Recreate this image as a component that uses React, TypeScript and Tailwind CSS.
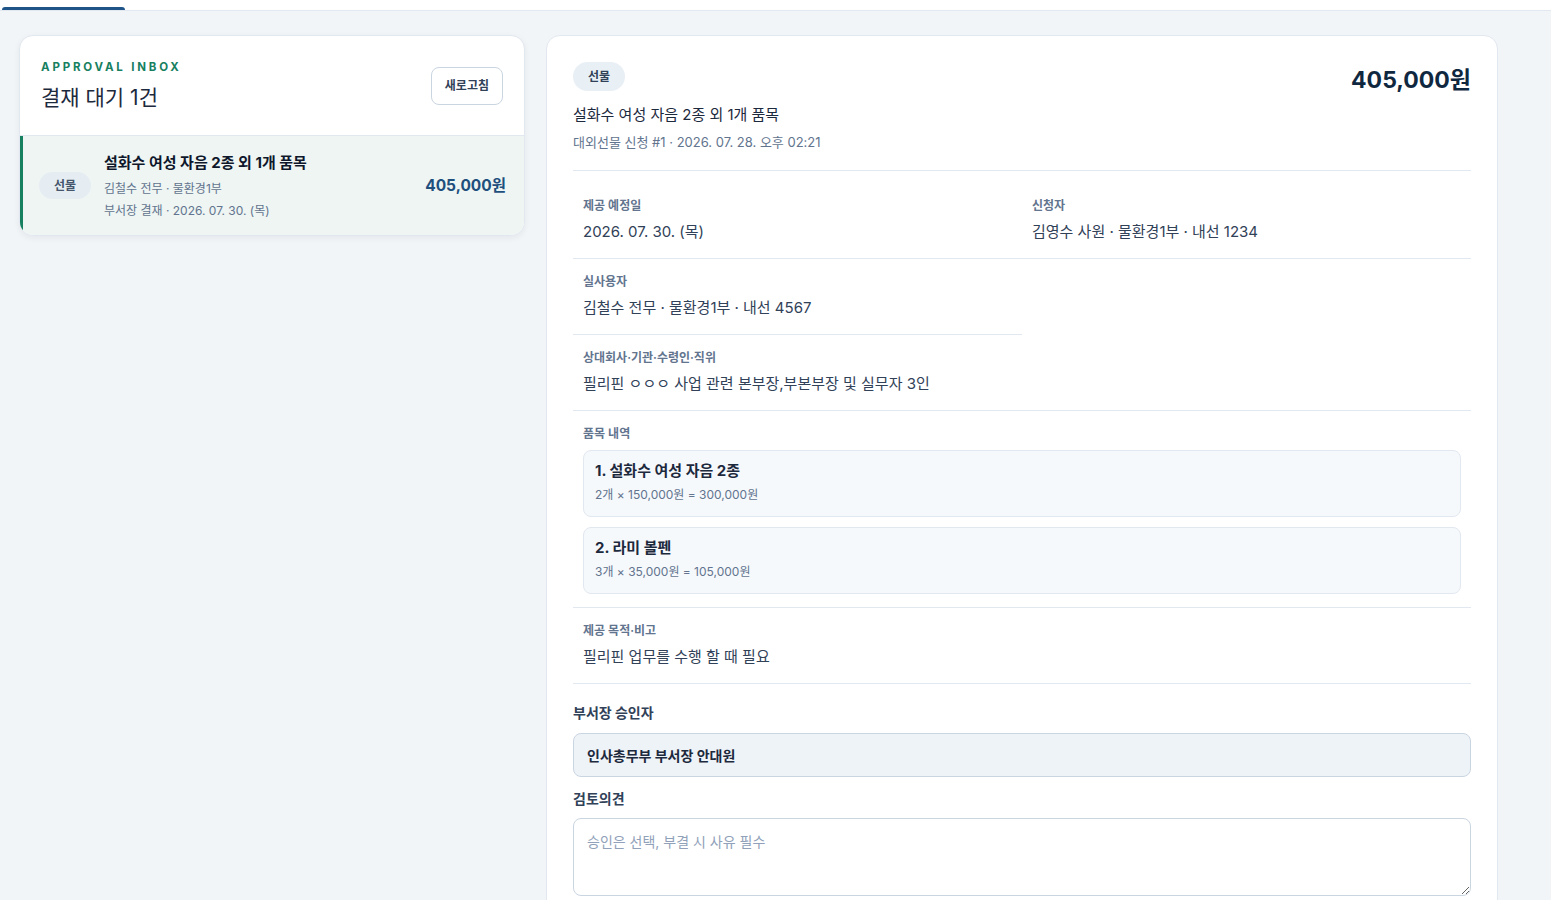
import { FC } from 'react';

const font = { fontFamily: '"Inter", "Noto Sans CJK KR", sans-serif' };

interface FieldProps {
  label: string;
  value: string;
  full?: boolean;
}

const Field: FC<FieldProps> = ({ label, value, full }) => (
  <div className={`border-b border-slate-200 px-[10px] pt-[15px] pb-[15px] ${full ? 'col-span-2' : ''}`}>
    <div className="text-[12px] leading-4 font-semibold text-slate-500">{label}</div>
    <div className="mt-[7px] text-[15px] leading-[22px] text-slate-700">{value}</div>
  </div>
);

const items = [
  { name: '1. 설화수 여성 자음 2종', calc: '2개 × 150,000원 = 300,000원' },
  { name: '2. 라미 볼펜', calc: '3개 × 35,000원 = 105,000원' },
];

export default function App() {
  return (
    <div className="min-h-screen bg-[#f2f5f8] text-slate-800" style={font}>
      {/* Tab strip (scrolled) */}
      <div className="h-[11px] bg-white border-b border-slate-200 flex items-end">
        <div className="ml-[2px] w-[123px] h-[3px] rounded-t-sm bg-[#1f5489]" />
      </div>

      <div className="flex items-start gap-[21px] pl-[19px] pt-[24px]">
        {/* Inbox list */}
        <section className="w-[506px] shrink-0 bg-white border border-slate-200 rounded-[14px] overflow-hidden shadow-[0_2px_6px_rgba(15,23,42,0.06)]">
          <div className="flex items-center justify-between px-[21px] pt-[23px] pb-[22px] border-b border-slate-200">
            <div>
              <div className="text-[11.5px] leading-4 font-bold tracking-[2.8px] text-[#17805f]">APPROVAL INBOX</div>
              <h2 className="mt-[8px] text-[21px] leading-[30px] text-slate-800">결재 대기 1건</h2>
            </div>
            <button className="h-[38px] px-[13px] rounded-lg border border-slate-300 bg-white text-[12px] font-bold text-slate-700">
              새로고침
            </button>
          </div>

          <div className="flex items-center bg-[#eef5f3] border-l-[3px] border-[#17805f] pl-[16px] pr-[18px] h-[99px]">
            <span className="w-[52px] h-[27px] rounded-full bg-[#e6edf2] flex items-center justify-center text-[12px] font-bold text-slate-600">
              선물
            </span>
            <div className="ml-[13px] flex-1">
              <div className="text-[15px] leading-5 font-bold text-slate-900">설화수 여성 자음 2종 외 1개 품목</div>
              <div className="mt-[8px] text-[12px] leading-4 text-slate-500">김철수 전무 · 물환경1부</div>
              <div className="mt-[6px] text-[12px] leading-4 text-slate-500">부서장 결재 · 2026. 07. 30. (목)</div>
            </div>
            <div className="text-[15.5px] font-bold text-[#1f4f7d]">405,000원</div>
          </div>
        </section>

        {/* Detail */}
        <section className="w-[952px] shrink-0 bg-white border border-slate-200 rounded-[14px] px-[26px] pt-[26px] pb-6">
          <div className="flex items-start justify-between">
            <div>
              <span className="inline-flex items-center h-[29px] px-[15px] rounded-full bg-[#e8f0f6] text-[12px] font-bold text-slate-700">
                선물
              </span>
              <div className="mt-[14px] text-[15px] leading-5 text-slate-800">설화수 여성 자음 2종 외 1개 품목</div>
              <div className="mt-[7px] text-[13px] leading-5 text-slate-500">대외선물 신청 #1 · 2026. 07. 28. 오후 02:21</div>
            </div>
            <div className="mt-[2px] text-[23px] leading-8 font-bold text-[#10283f]">405,000원</div>
          </div>

          <div className="mt-[18px] border-t border-slate-200 pt-[12px] grid grid-cols-2">
            <Field label="제공 예정일" value="2026. 07. 30. (목)" />
            <Field label="신청자" value="김영수 사원 · 물환경1부 · 내선 1234" />
            <Field label="실사용자" value="김철수 전무 · 물환경1부 · 내선 4567" />
            <div />
            <Field full label="상대회사·기관·수령인·직위" value="필리핀 ㅇㅇㅇ 사업 관련 본부장,부본부장 및 실무자 3인" />

            <div className="col-span-2 border-b border-slate-200 px-[10px] pt-[15px] pb-[13px]">
              <div className="text-[12px] leading-4 font-semibold text-slate-500">품목 내역</div>
              <div className="mt-[8px] flex flex-col gap-[10px]">
                {items.map((it) => (
                  <div key={it.name} className="h-[67px] rounded-lg border border-slate-200 bg-[#f6f9fc] px-[11px] pt-[10px]">
                    <div className="text-[15px] leading-5 font-bold text-slate-800">{it.name}</div>
                    <div className="mt-[6px] text-[12px] leading-4 text-slate-500">{it.calc}</div>
                  </div>
                ))}
              </div>
            </div>

            <Field full label="제공 목적·비고" value="필리핀 업무를 수행 할 때 필요" />
          </div>

          <div className="mt-[19px] text-[14px] leading-5 font-bold text-slate-700">부서장 승인자</div>
          <div className="mt-[10px] h-[44px] rounded-lg border border-slate-300 bg-[#eef3f7] px-[13px] flex items-center text-[14px] font-bold text-slate-800">
            인사총무부 부서장 안대원
          </div>

          <div className="mt-[12px] text-[14px] leading-5 font-bold text-slate-700">검토의견</div>
          <textarea
            className="mt-[9px] block w-full h-[78px] rounded-lg border border-slate-300 px-[13px] py-[12px] text-[14px] text-slate-700 placeholder:text-slate-400 outline-none"
            placeholder="승인은 선택, 부결 시 사유 필수"
          />
        </section>
      </div>
    </div>
  );
}
